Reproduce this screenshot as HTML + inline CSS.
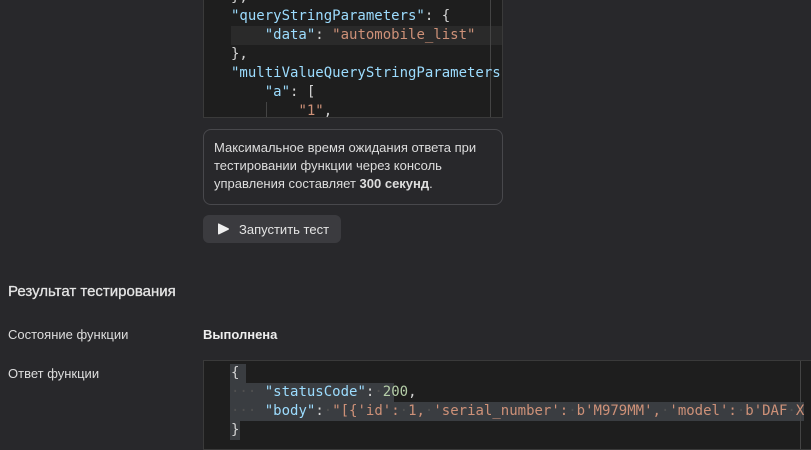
<!DOCTYPE html>
<html><head><meta charset="utf-8"><style>
*{margin:0;padding:0;box-sizing:border-box}
body{width:811px;height:445px;overflow:hidden;background:#28282b;font-family:"Liberation Sans","DejaVu Sans",sans-serif;color:#ddd;position:relative}
.ed{position:absolute;background:#1e1e1e;font-family:"DejaVu Sans Mono","Liberation Mono",monospace;font-size:14px;line-height:19px;color:#d4d4d4;overflow:hidden;white-space:pre}
.k{color:#9cdcfe}.s{color:#ce9178}.n{color:#b5cea8}.d{color:#505050}
.ln{position:absolute;left:27px;height:19px}
.t{position:absolute;font-size:13px;color:#ddd}
</style></head><body>
<div class="ed" style="left:203px;top:-10px;width:300px;height:128px;border:1px solid #3a3a3a;border-top:none">
<div style="position:absolute;left:27px;top:36px;width:273px;height:19px;background:#2a2a2a"></div>
<div style="position:absolute;left:286px;top:0;width:1px;height:128px;background:#444"></div>
<div class="ln" style="top:-2px">},</div>
<div class="ln" style="top:17px"><span class="k">"queryStringParameters"</span>: {</div>
<div class="ln" style="top:36px">    <span class="k">"data"</span>: <span class="s">"automobile_list"</span></div>
<div class="ln" style="top:55px">},</div>
<div class="ln" style="top:74px"><span class="k">"multiValueQueryStringParameters"</span></div>
<div class="ln" style="top:93px">    <span class="k">"a"</span>: [</div>
<div class="ln" style="top:112px">        <span class="s">"1"</span>,</div>
<div style="position:absolute;left:62px;top:112px;width:1px;height:19px;background:#444"></div>
</div>
<div style="position:absolute;left:203px;top:129px;width:300px;height:76px;border:1px solid #48484c;border-radius:8px;padding:9px 10px;font-size:13px;line-height:18px;color:#ddd">Максимальное время ожидания ответа при тестировании функции через консоль управления составляет <b>300 секунд</b>.</div>
<div style="position:absolute;left:203px;top:215px;width:138px;height:28px;background:#3b3b3f;border-radius:6px;font-size:13px;color:#e4e4e4">
<svg style="position:absolute;left:14px;top:7px" width="13" height="14" viewBox="0 0 13 14"><path d="M2 1.5Q1 1 1 2.5V11.5Q1 13 2.3 12.3L11.5 7.8Q12.5 7 11.5 6.2L2.3 1.7Z" fill="#eee"/></svg>
<span style="position:absolute;left:36px;top:7px">Запустить тест</span></div>
<div style="position:absolute;left:8px;top:283px;font-size:15px;color:#e4e4e4;-webkit-text-stroke:0.3px #e4e4e4">Результат тестирования</div>
<div class="t" style="left:8px;top:327px">Состояние функции</div>
<div class="t" style="left:203px;top:327px;font-weight:bold;color:#eee">Выполнена</div>
<div class="t" style="left:8px;top:366px">Ответ функции</div>
<div class="ed" style="left:203px;top:360px;width:610px;height:90px;border:1px solid #3a3a3a">
<div style="position:absolute;left:26px;top:3px;width:16px;height:19px;background:#3a3d41"></div>
<div style="position:absolute;left:26px;top:22px;width:164px;height:19px;background:#3a3d41"></div>
<div style="position:absolute;left:26px;top:41px;width:574px;height:19px;background:#3a3d41"></div>
<div style="position:absolute;left:26px;top:60px;width:10px;height:19px;background:#3a3d41"></div>
<div style="position:absolute;left:596px;top:0;width:1px;height:90px;background:#444"></div>
<div class="ln" style="top:3px">{</div>
<div class="ln" style="top:22px"><span class="d">···</span> <span class="k">"statusCode"</span>:<span class="d">·</span><span class="n">200</span>,</div>
<div class="ln" style="top:41px"><span class="d">···</span> <span class="k">"body"</span>:<span class="d">·</span><span class="s">"[{'id':<span class="d">·</span>1,<span class="d">·</span>'serial_number':<span class="d">·</span>b'M979MM',<span class="d">·</span>'model':<span class="d">·</span>b'DAF<span class="d">·</span>X</span></div>
<div class="ln" style="top:60px">}</div>
</div>
</body></html>
